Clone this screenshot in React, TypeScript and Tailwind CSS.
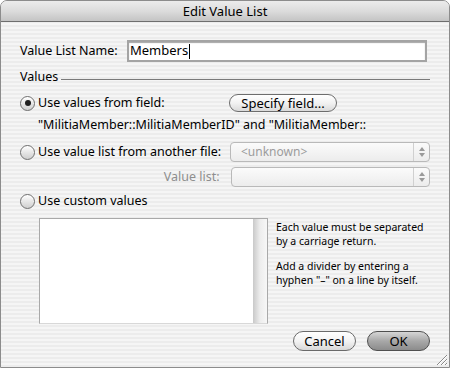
import React from "react";

function Radio({ checked = false }: { checked?: boolean }) {
  return (
    <span className="relative flex h-[15px] w-[15px] shrink-0 items-center justify-center rounded-full border border-[#6f6f6f] bg-gradient-to-b from-[#ffffff] via-[#e6e6e6] to-[#cfcfcf] shadow-[inset_0_1px_1px_rgba(255,255,255,0.9)]">
      {checked && <span className="h-[6px] w-[6px] rounded-full bg-[#1e1e1e]" />}
    </span>
  );
}

function Popup({ value }: { value?: string }) {
  return (
    <div className="flex h-[20px] w-[200px] items-stretch rounded-[4px] border border-[#b9b9b9] bg-gradient-to-b from-[#fbfbfb] to-[#ececec]">
      <div className="flex flex-1 items-center pl-[10px] text-[12px] text-[#9c9c9c]">{value}</div>
      <div className="flex w-[16px] flex-col items-center justify-center gap-[2px] border-l border-[#d0d0d0]">
        <svg width="6" height="4" viewBox="0 0 6 4">
          <path d="M3 0L6 4H0z" fill="#9a9a9a" />
        </svg>
        <svg width="6" height="4" viewBox="0 0 6 4">
          <path d="M0 0H6L3 4z" fill="#9a9a9a" />
        </svg>
      </div>
    </div>
  );
}

export default function App() {
  return (
    <div className="h-[369px] w-[450px] bg-white font-['Lucida_Grande','Noto_Sans',sans-serif] text-[12.5px] text-black">
      <div className="relative flex h-[368px] w-[450px] flex-col overflow-hidden rounded-t-[7px] border border-[#8c8c8c] bg-[repeating-linear-gradient(to_bottom,#ececec_0px,#ececec_2px,#f5f5f5_2px,#f5f5f5_4px)]">
        {/* title bar */}
        <div className="flex h-[21px] shrink-0 items-center justify-center border-b border-[#6e6e6e] bg-gradient-to-b from-[#ececec] via-[#dcdcdc] to-[#c4c4c4] text-[13px] leading-none">
          Edit Value List
        </div>

        <div className="flex flex-col pl-[19px] pr-[19px]">
          {/* name */}
          <div className="mt-[18px] flex h-[22px] items-center">
            <span className="w-[107px]">Value List Name:</span>
            <div className="flex h-[22px] w-[300px] items-center border-2 border-[#a4a4a4] bg-white pl-[1px] text-[13px] shadow-[inset_0_1px_1px_rgba(0,0,0,0.35)]">
              Members<span className="ml-[1px] h-[15px] w-[1px] bg-black" />
            </div>
          </div>

          {/* values group */}
          <div className="mt-[7px] flex h-[16px] items-center gap-[3px]">
            <span>Values</span>
            <span className="mt-[4px] h-[1px] flex-1 bg-[#7a7a7a]" />
          </div>

          <div className="mt-[9px] flex h-[18px] items-center">
            <Radio checked />
            <span className="ml-[3px] w-[191px]">Use values from field:</span>
            <button className="h-[18px] w-[108px] rounded-full border border-[#6d6d6d] bg-gradient-to-b from-[#ffffff] via-[#f2f2f2] to-[#dadada] text-[13px] leading-none">
              Specify field...
            </button>
          </div>

          <div className="mt-[5px] flex h-[16px] items-center pl-[18px] whitespace-nowrap">
            "MilitiaMember::MilitiaMemberID" and "MilitiaMember::
          </div>

          <div className="mt-[9px] flex h-[20px] items-center">
            <Radio />
            <span className="ml-[3px] w-[192px]">Use value list from another file:</span>
            <Popup value="<unknown>" />
          </div>

          <div className="mt-[5px] flex h-[20px] items-center">
            <span className="w-[202px] pr-[2px] text-right text-[#8e8e8e]">Value list:</span>
            <span className="w-[9px]" />
            <Popup />
          </div>

          <div className="mt-[6px] flex h-[16px] items-center">
            <Radio />
            <span className="ml-[3px]">Use custom values</span>
          </div>

          {/* custom values */}
          <div className="mt-[9px] flex h-[106px]">
            <div className="ml-[19px] flex w-[229px] shrink-0 border border-[#a9a9a9] border-b-[#d8d8d8] bg-white">
              <div className="flex-1" />
              <div className="w-[14px] bg-gradient-to-r from-[#c9c9c9] via-[#ededed] to-[#f7f7f7]" />
            </div>
            <div className="ml-[8px] flex flex-col whitespace-nowrap pt-[2px] text-[10.5px] leading-[14px]">
              <p>Each value must be separated</p>
              <p>by a carriage return.</p>
              <p className="mt-[11px]">Add a divider by entering a</p>
              <p>hyphen "–" on a line by itself.</p>
            </div>
          </div>

          {/* buttons */}
          <div className="mt-[7px] flex h-[20px] justify-end gap-[11px]">
            <button className="h-[20px] w-[63px] rounded-full border border-[#6a6a6a] bg-gradient-to-b from-[#ffffff] via-[#f3f3f3] to-[#d8d8d8] text-[13px] leading-none">
              Cancel
            </button>
            <button className="h-[20px] w-[63px] rounded-full border border-[#4f4f4f] bg-gradient-to-b from-[#d6d6d6] via-[#a8a8a8] to-[#8c8c8c] text-[13px] leading-none">
              OK
            </button>
          </div>
        </div>

        {/* resize grip */}
        <svg className="absolute bottom-[1px] right-[1px]" width="12" height="12" viewBox="0 0 12 12">
          <path d="M11 1L1 11M11 5L5 11M11 9L9 11" stroke="#8a8a8a" strokeWidth="1" />
          <path d="M11 2L2 11M11 6L6 11M11 10L10 11" stroke="#ffffff" strokeWidth="1" />
        </svg>
      </div>
    </div>
  );
}
